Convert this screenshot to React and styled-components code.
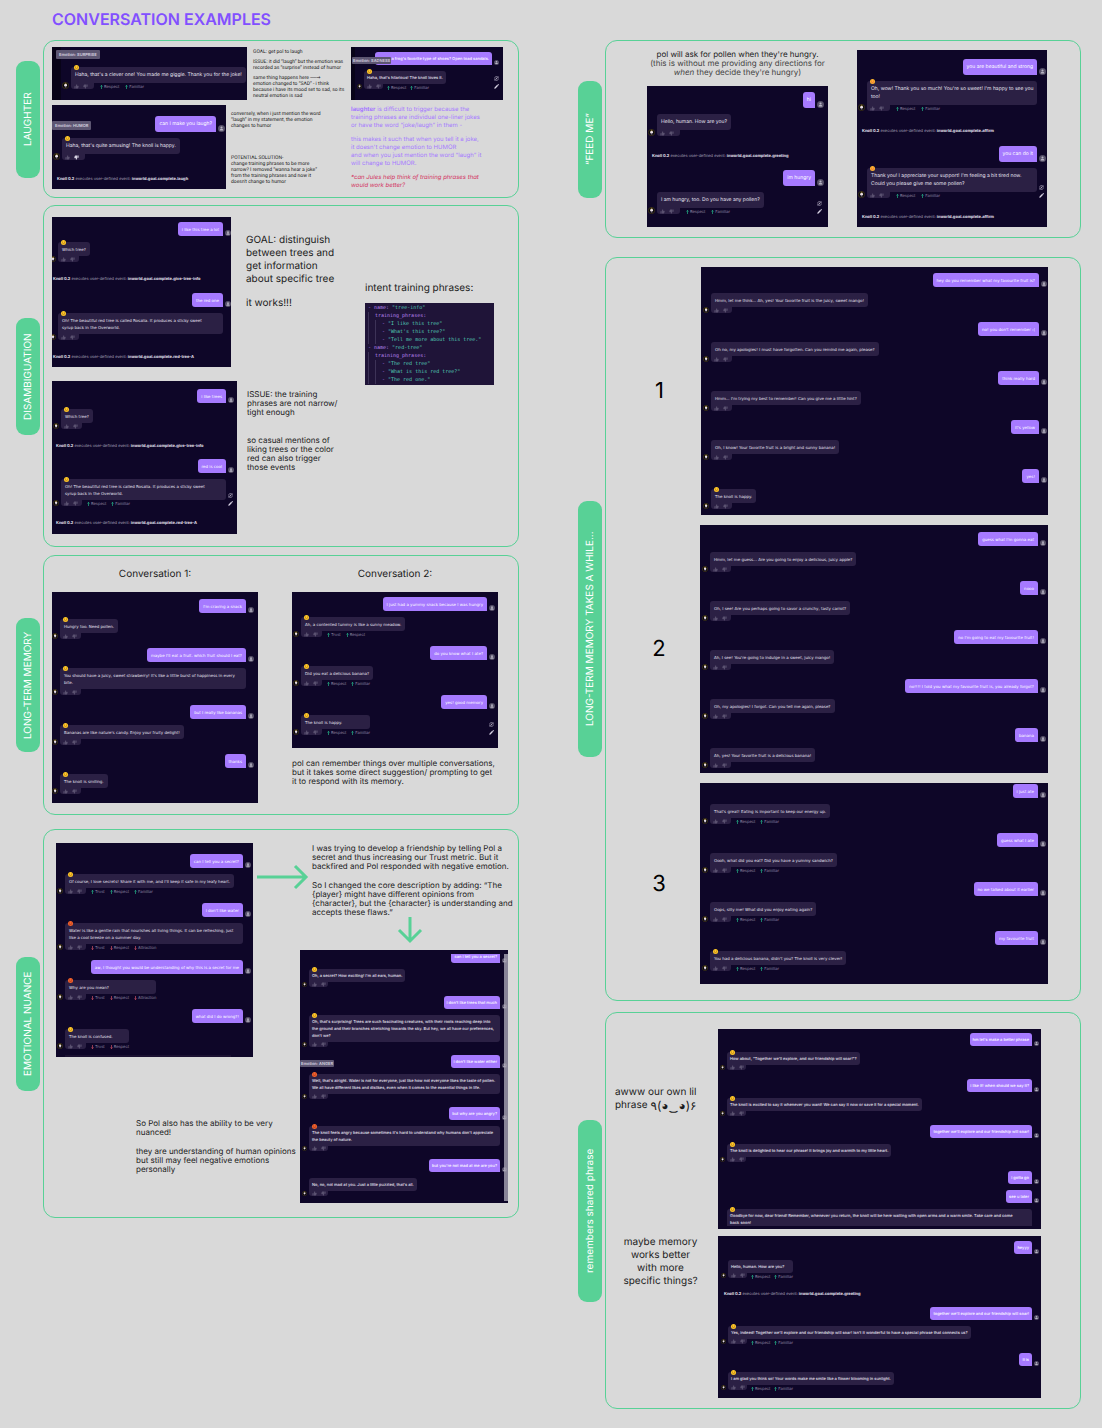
import React from "react";
import styled, { createGlobalStyle, css, ThemeProvider } from "styled-components";

const colors = {
  board: "#d9d9d9",
  green: "#58d196",
  violet: "#a67aff",
  title: "#8250ff",
  night: "#0e0628",
  slate: "#2b2044",
  ink: "#1b1b1b",
};

const GlobalStyle = createGlobalStyle`
  *, *::before, *::after { box-sizing: border-box; }
  body {
    margin: 0;
    background: ${colors.board};
    color: ${colors.ink};
    font-family: Inter, "Liberation Sans", sans-serif;
    text-rendering: geometricPrecision;
  }
  h1, h2, h3, p, figure, pre { margin: 0; font-weight: 400; }
  button { border: 0; padding: 0; background: none; color: inherit; display: flex; }
`;

const inter = `Inter, "Liberation Sans", sans-serif`;
const dejavu = `"DejaVu Sans", "Liberation Sans", sans-serif`;

/* chat sizes: bubble text, line, bubble padding, avatar, spacing between turns */
const sizes = {
  s: { font: 4, family: inter, weight: 500, line: 7, pad: "3px", avatar: 5, tail: 5, tailWidth: 19, statGap: 4, tagTop: -14, tagHeight: 7, tagPad: 1, event: 4 },
  m: { font: 4, family: dejavu, weight: 400, line: 7, pad: "4px 4px 3px", avatar: 6, tail: 6, tailWidth: 21, statGap: 5, tagTop: -14, tagHeight: 7, tagPad: 1, event: 4 },
  l: { font: 5, family: inter, weight: 400, line: 8, pad: "4px", avatar: 7, tail: 6, tailWidth: 23, statGap: 6, tagTop: -17, tagHeight: 9, tagPad: 3, event: 4 },
};

/* ---------- board ---------- */

const Page = styled.main`
  padding: 10px 21px 19px 16px;
`;

const Title = styled.h1`
  padding-left: 36px;
  margin-bottom: 12px;
  font-size: 16px;
  line-height: 18px;
  font-weight: 600;
  color: ${colors.title};
`;

const Columns = styled.div`
  display: grid;
  grid-template-columns: minmax(0, 1fr) minmax(0, 1fr);
  gap: 59px;
  align-items: start;
`;

const Column = styled.div`
  display: flex;
  flex-direction: column;
`;

const SectionRow = styled.section`
  display: flex;
  align-items: center;
  gap: 3px;
  margin-top: ${(p) => p.$mt || 0}px;
`;

const Pill = styled.h2`
  flex: none;
  display: flex;
  align-items: center;
  justify-content: center;
  width: 24px;
  height: ${(p) => p.$h}px;
  border-radius: 9px;
  background: ${colors.green};
  color: #fff;
  font-size: 10px;
  line-height: 24px;
  white-space: nowrap;
  writing-mode: vertical-rl;
  transform: rotate(180deg);
`;

const Frame = styled.div`
  flex: 1;
  min-width: 0;
  padding: ${(p) => p.$pad};
  border: 1px solid ${colors.green};
  border-radius: 12px;
`;

const Split = styled.div`
  display: grid;
  grid-template-columns: ${(p) => p.$cols.map((c) => `minmax(0, ${c}fr)`).join(" ")};
`;

const Stack = styled.div`
  display: flex;
  flex-direction: column;
  gap: ${(p) => p.$gap || 0}px;
  padding-top: ${(p) => p.$pt || 0}px;
  padding-left: ${(p) => p.$pl || 0}px;
`;

const Line = styled.div`
  display: flex;
  align-items: flex-start;
  gap: ${(p) => p.$gap || 0}px;
  padding-left: ${(p) => p.$pl || 0}px;
`;

const noteSizes = {
  tiny: css`font-family: Roboto, "Liberation Sans", sans-serif; font-size: 5px; line-height: 6px; --gap: 4px;`,
  small: css`font-size: 6px; line-height: 8px; --gap: 6px;`,
  body: css`font-size: 8px; line-height: 9px; --gap: 10px;`,
  large: css`font-size: 10px; line-height: 13px; --gap: 11px;`,
};

const Note = styled.div`
  ${(p) => noteSizes[p.$size]}
  display: flex;
  flex-direction: column;
  gap: ${(p) => (p.$gap ? `${p.$gap}px` : "var(--gap)")};
  padding-top: ${(p) => p.$pt || 0}px;
  padding-left: ${(p) => p.$pl || 0}px;
  color: ${(p) => p.$color || colors.ink};
  text-align: ${(p) => p.$align || "left"};
  white-space: pre;
`;

const Warning = styled.p`
  color: #d3335f;
  font-style: italic;
`;

const Soft = styled.p`
  color: #444;
`;

const Pointer = styled.span`
  font-family: ${dejavu};
`;

const Heading = styled.h3`
  font-size: 10px;
  line-height: 13px;
  text-align: ${(p) => p.$align || "left"};
  white-space: nowrap;
`;

const NumberedRow = styled.div`
  display: flex;
  align-items: center;
`;

const Number = styled.h3`
  flex: 1;
  text-align: center;
  font-size: 22px;
  line-height: 26px;
  color: #000;
`;

const Aside = styled.div`
  flex: 1;
  min-width: 0;
  padding: 0 12px 0 9px;
`;

const Kaomoji = styled.p`
  direction: ltr;
  unicode-bidi: bidi-override;
  font-size: 12px;
`;

const Inline = styled.div`
  display: flex;
  gap: 3px;
`;

const Arrow = styled.svg`
  flex: none;
  display: block;
  overflow: visible;
  stroke: ${colors.green};
  fill: none;
  stroke-width: 3;
  margin-top: ${(p) => p.$mt || 0}px;
  margin-left: ${(p) => p.$ml || 0}px;
`;

/* ---------- chat capture ---------- */

const ShotBox = styled.figure`
  position: relative;
  flex: none;
  width: ${(p) => p.$w}px;
  padding: ${(p) => p.$pt}px 0 ${(p) => p.$pb}px;
  box-shadow: inset ${(p) => p.$strip || 0}px 0 #080318;
  overflow: hidden;
  background: ${colors.night};
  color: #e6e2f0;
`;

const MineRow = styled.div`
  display: flex;
  justify-content: flex-end;
  align-items: flex-end;
  gap: 2px;
  margin-top: ${(p) => p.$mt}px;
  margin-right: ${(p) => p.theme.pr}px;
`;

const bubble = css`
  padding: ${(p) => p.theme.pad};
  font-family: ${(p) => p.theme.family};
  font-size: ${(p) => p.theme.font}px;
  font-weight: ${(p) => p.theme.weight};
  line-height: ${(p) => p.theme.line}px;
  white-space: pre;
`;

const MineBubble = styled.p`
  ${bubble}
  ${(p) => p.$lead && css`padding-left: ${p.$lead}px;`}
  border-radius: 3px 3px 0 3px;
  background: ${colors.violet};
  color: #fff;
`;

const Round = styled.svg`
  flex: none;
  display: block;
  width: ${(p) => p.theme.avatar}px;
  height: ${(p) => p.theme.avatar}px;
`;

const BotRow = styled.div`
  display: flex;
  align-items: flex-end;
  gap: 2px;
  margin-top: ${(p) => p.$mt}px;
  margin-left: ${(p) => p.theme.pl}px;
  margin-right: ${(p) => p.theme.pr}px;
`;

const BotBody = styled.div`
  position: relative;
  ${(p) => p.$wide && css`
    flex: 1;
    margin-right: ${p.$tools ? 0 : p.theme.avatar + 2}px;
  `}
`;

const BotBubble = styled.p`
  ${bubble}
  border-radius: 3px 3px 3px 0;
  background: ${colors.slate};
`;

const BotFoot = styled.div`
  display: flex;
  align-items: center;
  height: ${(p) => p.theme.tail}px;
`;

const Thumbs = styled.div`
  flex: none;
  display: flex;
  align-items: center;
  gap: 4px;
  width: ${(p) => p.theme.tailWidth}px;
  height: 100%;
  padding-left: 3px;
  border-radius: 0 0 3px 3px;
  background: ${colors.slate};
`;

const Thumb = styled.button`
  color: ${(p) => (p.$on ? "#d8d3e4" : "#5a5170")};
  svg { width: 5px; height: 5px; display: block; }
`;

const Stat = styled.span`
  display: flex;
  align-items: center;
  gap: 1px;
  padding-left: ${(p) => p.theme.statGap}px;
  padding-top: 2px;
  font-size: 4px;
  line-height: 4px;
  color: #8f88a3;
  white-space: nowrap;
  svg {
    width: 3px;
    height: 4px;
    fill: none;
    stroke-width: 2;
    stroke: ${(p) => (p.$down ? "#d8556a" : "#25b98b")};
  }
`;

const Face = styled.svg`
  position: absolute;
  top: -2px;
  left: 3px;
  width: 5px;
  height: 5px;
`;

const Tag = styled.span`
  position: absolute;
  top: ${(p) => p.theme.tagTop}px;
  left: ${(p) => p.$x}px;
  padding: 0 ${(p) => p.theme.tagPad}px;
  border-radius: 1px;
  background: #5d5672;
  color: #d6d2e0;
  font-size: 4px;
  line-height: ${(p) => p.theme.tagHeight}px;
  font-weight: 600;
  white-space: nowrap;
`;

const Tools = styled.div`
  flex: none;
  display: flex;
  flex-direction: column;
  gap: 3px;
  margin-left: auto;
  width: ${(p) => p.theme.avatar}px;
  color: #d8d3e4;
  svg { width: 5px; height: 5px; display: block; }
`;

const EventText = styled.p`
  margin-top: ${(p) => p.$mt}px;
  padding-left: ${(p) => p.$pl}px;
  font-size: ${(p) => p.theme.event}px;
  line-height: 6px;
  font-weight: 400;
  color: #aaa5b8;
  white-space: nowrap;
  b { font-weight: 700; color: #e6e2f0; }
`;

const TopClip = styled.div`
  display: flex;
  flex-direction: column;
  justify-content: flex-end;
  height: 9px;
  overflow: hidden;
`;

const BottomClip = styled.div`
  margin-top: 6px;
  height: 17px;
  clip-path: inset(-4px 0 0 0);
`;

const ScrollThumb = styled.span`
  position: absolute;
  top: 4px;
  right: 0;
  bottom: 2px;
  width: 4px;
  background: #a9a5b4;
  opacity: 0.8;
`;

const Peek = styled.div`
  width: 166px;
  height: 2px;
  margin: 6px 0 0 9px;
  background: #1b1132;
`;

function Shot({ size = "m", pl = 0, pr = 0, pt, pb, w, strip, children }) {
  return (
    <ThemeProvider theme={{ ...sizes[size], pl, pr }}>
      <ShotBox $w={w} $pt={pt} $pb={pb} $strip={strip}>{children}</ShotBox>
    </ThemeProvider>
  );
}

function Mine({ children, mt = 9, lead }) {
  return (
    <MineRow $mt={mt}>
      <MineBubble $lead={lead}>{children}</MineBubble>
      <Round viewBox="0 0 12 12">
        <circle cx="6" cy="6" r="6" fill="#565068" />
        <circle cx="6" cy="4.4" r="1.8" fill="#b9b5c6" />
        <path d="M2.8 9.4c0-2.2 1.4-3 3.2-3s3.2.8 3.2 3z" fill="#b9b5c6" />
      </Round>
    </MineRow>
  );
}

const faceColors = {
  smile: ["#ffc928", "#8a4b12"],
  angry: ["#f4622c", "#6e1a12"],
  love: ["#ffb52e", "#e23b4e"],
};

function Emotion({ kind }) {
  const [skin, mark] = faceColors[kind];
  return (
    <Face viewBox="0 0 12 12">
      <circle cx="6" cy="6" r="6" fill={skin} />
      <circle cx="3.8" cy="4.8" r="1" fill={mark} />
      <circle cx="8.2" cy="4.8" r="1" fill={mark} />
      <path d={kind === "angry" ? "M3.4 9.2q2.6-2.4 5.2 0" : "M3 7q3 3.4 6 0"} stroke={mark} strokeWidth="1.2" fill="none" />
    </Face>
  );
}

const thumbPath = "M1 5.4h2V11H1zM3.8 5.4 6.2.8c1.2 0 1.6.8 1.4 1.8L7.2 4.4h3c.8 0 1.2.7 1 1.4l-1.1 4c-.2.7-.6 1.2-1.4 1.2H3.8z";

function Bot({ children, mt = 6, face, tag, tagX, wide, up, down, tools, foot = true, disliked }) {
  const stats = up || down || [];
  return (
    <BotRow $mt={mt}>
      <Round viewBox="0 0 12 12">
        {foot && (
          <>
            <circle cx="6" cy="6" r="5.4" fill="#04030a" stroke="#4b3f1c" strokeWidth="1.2" />
            <circle cx="6.2" cy="5.6" r="2.4" fill="#e9dfe6" />
            <path d="M4.4 3.6l1.6-1.4 1.6.8" stroke="#d6b13c" strokeWidth="1.2" fill="none" />
            <path d="M4.6 8.4l2.8.8" stroke="#8d7a9a" strokeWidth="1.4" />
          </>
        )}
      </Round>
      <BotBody $wide={wide} $tools={tools}>
        <BotBubble>{children}</BotBubble>
        {foot && (
          <BotFoot>
            <Thumbs>
              <Thumb type="button" aria-label="Like">
                <svg viewBox="0 0 12 12"><path d={thumbPath} fill="currentColor" /></svg>
              </Thumb>
              <Thumb type="button" aria-label="Dislike" $on={disliked}>
                <svg viewBox="0 0 12 12"><path d={thumbPath} fill="currentColor" transform="rotate(180 6 6)" /></svg>
              </Thumb>
            </Thumbs>
            {stats.map((s) => (
              <Stat key={s} $down={!!down}>
                <svg viewBox="0 0 9 12">
                  <path d={down ? "M4.5 0V11M.8 7.2l3.7 3.8 3.7-3.8" : "M4.5 12V1M.8 4.8L4.5 1l3.7 3.8"} />
                </svg>
                {s}
              </Stat>
            ))}
          </BotFoot>
        )}
        {face && <Emotion kind={face} />}
        {tag && <Tag $x={tagX}>{tag}</Tag>}
      </BotBody>
      {tools && (
        <Tools>
          <button type="button" aria-label="Regenerate">
            <svg viewBox="0 0 12 12" fill="none" stroke="currentColor" strokeWidth="1.2">
              <path d="M1.2 6a4.8 4.8 0 0 1 8.6-2.8M10.8 6a4.8 4.8 0 0 1-8.6 2.8" />
              <circle cx="6" cy="6" r="1" fill="currentColor" />
              <path d="M10.4 1v2.6H7.8M1.6 11V8.4h2.6" />
            </svg>
          </button>
          <button type="button" aria-label="Edit">
            <svg viewBox="0 0 12 12" fill="currentColor">
              <path d="M.6 11.4l.7-3L7.6 2l2.4 2.4-6.3 6.3zM8.4 1.3l1-1q.7-.5 1.4.2l.8.8q.6.7 0 1.3l-1 1z" />
            </svg>
          </button>
        </Tools>
      )}
    </BotRow>
  );
}

function Event({ name, mt, pl }) {
  return (
    <EventText $mt={mt} $pl={pl}>
      <b>Knoll 0.2</b> executes user-defined event: <b>inworld.goal.complete.{name}</b>
    </EventText>
  );
}

function Section({ label, pill, pad, mt, children }) {
  return (
    <SectionRow $mt={mt}>
      <Pill $h={pill}>{label}</Pill>
      <Frame $pad={pad}>{children}</Frame>
    </SectionRow>
  );
}

/* ---------- training phrase listing ---------- */

const Code = styled.pre`
  width: 129px;
  padding: 1px 0 1px 3px;
  background: #1f1438;
  color: #bd86f2;
  font-family: "DejaVu Sans Mono", monospace;
  font-size: 5px;
  line-height: 8px;
  i { font-style: normal; color: #52ccb6; }
`;

const Nest = styled.div`
  border-left: 1px solid #3d3357;
  padding-left: 6px;
`;

function Intent({ name, phrases }) {
  return (
    <>
      <div>- name: <i>"{name}"</i></div>
      <Nest>
        <div>training_phrases:</div>
        <Nest>
          {phrases.map((p) => <div key={p}>- <i>"{p}"</i></div>)}
        </Nest>
      </Nest>
    </>
  );
}

const RF = ["Respect", "Familiar"];

export default function App() {
  return (
    <Page>
      <GlobalStyle />
      <Title>CONVERSATION EXAMPLES</Title>
      <Columns>
        <Column>
          <Section label="LAUGHTER" pill={117} pad="6px 8px 7px">
            <Split $cols={[299, 159]}>
              <Stack $gap={5}>
                <Line $gap={6}>
                  <Shot size="l" w={195} strip={9} pl={10} pt={20} pb={11}>
                    <Bot mt={0} face="smile" tag="Emotion: SURPRISE" tagX={-15} up={RF}>Haha, that's a clever one! You made me giggle. Thank you for the joke!</Bot>
                  </Shot>
                  <Note $size="tiny" $pt={2}>
                    <p>GOAL: get pol to laugh</p>
                    <p>{"ISSUE: it did “laugh” but the emotion was\nrecorded as “surprise” instead of humor"}</p>
                    <div>
                      <p>same thing happens here <Pointer>──→</Pointer></p>
                      <p>{"emotion changed to “SAD” - i think\nbecause i have its mood set to sad, so its\nneutral emotion is sad"}</p>
                    </div>
                  </Note>
                </Line>
                <Line $gap={5}>
                  <Shot size="l" w={174} pl={1} pr={1} pt={11} pb={7}>
                    <Mine mt={0}>can I make you laugh?</Mine>
                    <Bot face="smile" tag="Emotion: HUMOR" tagX={-10} disliked>Haha, that's quite amusing! The knoll is happy.</Bot>
                    <Event name="laugh" mt={16} pl={5} />
                  </Shot>
                  <Note $size="tiny" $pt={6} $gap={26}>
                    <p>{"conversely, when i just mention the word\n“laugh” in my statement, the emotion\nchanges to humor"}</p>
                    <p>{"POTENTIAL SOLUTION-\nchange training phrases to be more\nnarrow? I removed “wanna hear a joke”\nfrom the training phrases and now it\ndoesn't change to humor"}</p>
                  </Note>
                </Line>
              </Stack>
              <Stack $gap={6}>
                <Shot size="s" w={152} strip={4} pl={6} pr={4} pt={5} pb={11}>
                  <Mine mt={0} lead={16}>a frog's favorite type of shoes? Open toad sandals.</Mine>
                  <Bot face="smile" tag="Emotion: SADNESS" tagX={-12} up={RF} tools>Haha, that's hilarious! The knoll loves it.</Bot>
                </Shot>
                <Note $size="small" $color={colors.violet}>
                  <div>
                    <p><b>laughter</b> is difficult to trigger because the</p>
                    <p>{"training phrases are individual one-liner jokes\nor have the word “joke/laugh” in them -"}</p>
                  </div>
                  <p>{"this makes it such that when you tell it a joke,\nit doesn't change emotion to HUMOR\nand when you just mention the word “laugh” it\nwill change to HUMOR."}</p>
                  <Warning>{"*can Jules help think of training phrases that\nwould work better?"}</Warning>
                </Note>
              </Stack>
            </Split>
          </Section>

          <Section label="DISAMBIGUATION" pill={117} pad="11px 8px 12px" mt={7}>
            <Split $cols={[313, 145]}>
              <Stack $gap={14}>
                <Line $gap={15}>
                  <Shot w={179} pl={-2} pt={5} pb={7}>
                    <Mine mt={0}>i like this tree a lot</Mine>
                    <Bot face="smile">Which tree?</Bot>
                    <Event name="give-tree-info" mt={14} pl={1} />
                    <Mine mt={11}>the red one</Mine>
                    <Bot face="smile" wide>{"Oh! The beautiful red tree is called Rosalia. It produces a sticky sweet\nsyrup back in the Overworld."}</Bot>
                    <Event name="red-tree-A" mt={14} pl={1} />
                  </Shot>
                  <Note $size="large" $pt={17}>
                    <p>{"GOAL: distinguish\nbetween trees and\nget information\nabout specific tree"}</p>
                    <p>it works!!!</p>
                  </Note>
                </Line>
                <Line $gap={10}>
                  <Shot w={185} pl={1} pr={3} pt={8} pb={8}>
                    <Mine mt={0}>i like trees</Mine>
                    <Bot face="smile">Which tree?</Bot>
                    <Event name="give-tree-info" mt={14} pl={4} />
                    <Mine mt={10}>red is cool</Mine>
                    <Bot face="smile" wide up={RF} tools>{"Oh! The beautiful red tree is called Rosalia. It produces a sticky sweet\nsyrup back in the Overworld."}</Bot>
                    <Event name="red-tree-A" mt={14} pl={4} />
                  </Shot>
                  <Note $size="body" $pt={9} $gap={19}>
                    <p>{"ISSUE: the training\nphrases are not narrow/\ntight enough"}</p>
                    <p>{"so casual mentions of\nliking trees or the color\nred can also trigger\nthose events"}</p>
                  </Note>
                </Line>
              </Stack>
              <Stack $gap={8} $pt={65}>
                <Heading>intent training phrases:</Heading>
                <Code>
                  <Intent name="tree-info" phrases={["I like this tree", "What's this tree?", "Tell me more about this tree."]} />
                  <Intent name="red-tree" phrases={["The red tree", "What is this red tree?", "The red one."]} />
                </Code>
              </Stack>
            </Split>
          </Section>

          <Section label="LONG-TERM MEMORY" pill={134} pad="12px 8px 11px" mt={8}>
            <Line $gap={34}>
              <Stack $gap={11}>
                <Heading $align="center">Conversation 1:</Heading>
                <Shot w={206} pr={4} pt={7} pb={9}>
                  <Mine mt={0}>I'm craving a snack</Mine>
                  <Bot face="smile">Hungry too. Need pollen.</Bot>
                  <Mine>maybe I'll eat a fruit. which fruit should I eat?</Mine>
                  <Bot face="smile" wide>{"You should have a juicy, sweet strawberry! It's like a little burst of happiness in every\nbite."}</Bot>
                  <Mine mt={10}>but I really like bananas</Mine>
                  <Bot face="smile">Bananas are like nature's candy. Enjoy your fruity delight!</Bot>
                  <Mine>thanks</Mine>
                  <Bot face="smile">The knoll is smiling.</Bot>
                </Shot>
              </Stack>
              <Stack $gap={11}>
                <Heading $align="center">Conversation 2:</Heading>
                <Shot w={206} pl={1} pr={3} pt={5} pb={13}>
                  <Mine mt={0}>I just had a yummy snack because I was hungry</Mine>
                  <Bot face="smile" up={["Trust", "Respect"]}>Ah, a contented tummy is like a sunny meadow.</Bot>
                  <Mine>do you know what I ate?</Mine>
                  <Bot face="smile" up={RF}>Did you eat a delicious banana?</Bot>
                  <Mine>yes! good memory</Mine>
                  <Bot face="smile" up={RF} tools>The knoll is happy.</Bot>
                </Shot>
                <Note $size="body">
                  <p>{"pol can remember things over multiple conversations,\nbut it takes some direct suggestion/ prompting to get\nit to respond with its memory."}</p>
                </Note>
              </Stack>
            </Line>
          </Section>

          <Section label="EMOTIONAL NUANCE" pill={134} pad="13px 8px 14px 12px" mt={14}>
            <Split $cols={[244, 210]}>
              <Stack $gap={62}>
                <Line $gap={4}>
                  <Shot w={197} pl={1} pr={2} pt={11} pb={0}>
                    <Mine mt={0}>can I tell you a secret?</Mine>
                    <Bot face="smile" up={["Trust", "Respect", "Familiar"]}>Of course, I love secrets! Share it with me, and I'll keep it safe in my leafy heart.</Bot>
                    <Mine>i don't like water</Mine>
                    <Bot face="angry" wide down={["Trust", "Respect", "Attraction"]}>{"Water is like a gentle rain that nourishes all living things. It can be refreshing, just\nlike a cool breeze on a summer day."}</Bot>
                    <Mine mt={10}>aw, I thought you would be understanding of why this is a secret for me</Mine>
                    <Bot face="angry" down={["Trust", "Respect", "Attraction"]}>Why are you mean?</Bot>
                    <Mine>what did I do wrong?!</Mine>
                    <Bot face="smile" down={["Trust", "Respect"]}>The knoll is confused.</Bot>
                    <Peek />
                  </Shot>
                  <Arrow $mt={22} width="51" height="24" viewBox="0 0 51 24">
                    <path d="M0 12H49M38 1L49 12L38 23" />
                  </Arrow>
                </Line>
                <Note $size="body" $pl={80}>
                  <p>{"So Pol also has the ability to be very\nnuanced!"}</p>
                  <p>{"they are understanding of human opinions\nbut still may feel negative emotions\npersonally"}</p>
                </Note>
              </Stack>
              <Stack>
                <Note $size="body" $pt={1} $pl={12}>
                  <p>{"I was trying to develop a friendship by telling Pol a\nsecret and thus increasing our Trust metric. But it\nbackfired and Pol responded with negative emotion."}</p>
                  <p>{"So I changed the core description by adding: “The\n{player} might have different opinions from\n{character}, but the {character} is understanding and\naccepts these flaws.”"}</p>
                </Note>
                <Stack $gap={7}>
                  <Arrow $ml={98} width="24" height="26" viewBox="0 0 24 26">
                    <path d="M12 0V24M1 13L12 24L23 13" />
                  </Arrow>
                  <Shot size="s" w={208} pl={2} pr={1} pt={4} pb={7}>
                    <TopClip><Mine mt={0}>can I tell you a secret?</Mine></TopClip>
                    <Bot face="smile">Oh, a secret? How exciting! I'm all ears, human.</Bot>
                    <Mine>i don't like trees that much</Mine>
                    <Bot face="smile" wide>{"Oh, that's surprising! Trees are such fascinating creatures, with their roots reaching deep into\nthe ground and their branches stretching towards the sky. But hey, we all have our preferences,\ndon't we?"}</Bot>
                    <Mine mt={8}>i don't like water either</Mine>
                    <Bot face="angry" wide tag="Emotion: ANGER" tagX={-9}>{"Well, that's alright. Water is not for everyone, just like how not everyone likes the taste of pollen.\nWe all have different likes and dislikes, even when it comes to the essential things in life."}</Bot>
                    <Mine mt={8}>but why are you angry?</Mine>
                    <Bot face="angry" wide>{"The knoll feels angry because sometimes it's hard to understand why humans don't appreciate\nthe beauty of nature."}</Bot>
                    <Mine mt={8}>but you're not mad at me are you?</Mine>
                    <Bot>No, no, not mad at you. Just a little puzzled, that's all.</Bot>
                    <ScrollThumb />
                  </Shot>
                </Stack>
              </Stack>
            </Split>
          </Section>
        </Column>

        <Column>
          <Section label="“FEED ME”" pill={117} pad="9px 32px 10px 41px">
            <Line $gap={29}>
              <Stack $gap={9}>
                <Note $size="body" $align="center">
                  <div>
                    <p>pol will ask for pollen when they're hungry.</p>
                    <Soft>(this is without me providing any directions for</Soft>
                    <Soft><em>when</em> they decide they're hungry)</Soft>
                  </div>
                </Note>
                <Shot size="l" w={181} pl={1} pr={4} pt={6} pb={13}>
                  <Mine mt={0}>hi</Mine>
                  <Bot>Hello, human. How are you?</Bot>
                  <Event name="greeting" mt={17} pl={5} />
                  <Mine mt={11}>im hungry</Mine>
                  <Bot up={RF} tools>I am hungry, too. Do you have any pollen?</Bot>
                </Shot>
              </Stack>
              <Shot size="l" w={190} pl={1} pr={1} pt={9} pb={7}>
                <Mine mt={0}>you are beautiful and strong</Mine>
                <Bot face="love" wide up={RF}>{"Oh, wow! Thank you so much! You're so sweet! I'm happy to see you\ntoo!"}</Bot>
                <Event name="affirm" mt={17} pl={5} />
                <Mine mt={12}>you can do it</Mine>
                <Bot face="love" wide up={RF} tools>{"Thank you! I appreciate your support! I'm feeling a bit tired now.\nCould you please give me some pollen?"}</Bot>
                <Event name="affirm" mt={16} pl={5} />
              </Shot>
            </Line>
          </Section>

          <Section label="LONG-TERM MEMORY TAKES A WHILE..." pill={256} pad="9px 32px 16px 12px" mt={19}>
            <Stack $gap={10}>
              <NumberedRow>
                <Number>1</Number>
                <Shot w={347} pl={2} pr={1} pt={6} pb={6}>
                  <Mine mt={0}>hey do you remember what my favourite fruit is?</Mine>
                  <Bot>Hmm, let me think... Ah, yes! Your favorite fruit is the juicy, sweet mango!</Bot>
                  <Mine>no! you don't remember :(</Mine>
                  <Bot>Oh no, my apologies! I must have forgotten. Can you remind me again, please?</Bot>
                  <Mine>think really hard</Mine>
                  <Bot>Hmm... I'm trying my best to remember! Can you give me a little hint?</Bot>
                  <Mine>it's yellow</Mine>
                  <Bot>Oh, I know! Your favorite fruit is a bright and sunny banana!</Bot>
                  <Mine>yes!</Mine>
                  <Bot face="smile">The knoll is happy.</Bot>
                </Shot>
              </NumberedRow>
              <NumberedRow>
                <Number>2</Number>
                <Shot w={348} pl={2} pr={2} pt={7} pb={5}>
                  <Mine mt={0}>guess what I'm gonna eat</Mine>
                  <Bot>Hmm, let me guess... Are you going to enjoy a delicious, juicy apple?</Bot>
                  <Mine>nooo</Mine>
                  <Bot>Oh, I see! Are you perhaps going to savor a crunchy, tasty carrot?</Bot>
                  <Mine>no I'm going to eat my favourite fruit!</Mine>
                  <Bot>Ah, I see! You're going to indulge in a sweet, juicy mango!</Bot>
                  <Mine>no!!!! I told you what my favourite fruit is, you already forgot?</Mine>
                  <Bot>Oh, my apologies! I forgot. Can you tell me again, please?</Bot>
                  <Mine>banana</Mine>
                  <Bot>Ah, yes! Your favorite fruit is a delicious banana!</Bot>
                </Shot>
              </NumberedRow>
              <NumberedRow>
                <Number>3</Number>
                <Shot w={348} pl={2} pr={2} pt={1} pb={13}>
                  <Mine mt={0}>i just ate</Mine>
                  <Bot up={RF}>That's great! Eating is important to keep our energy up.</Bot>
                  <Mine>guess what I ate</Mine>
                  <Bot up={RF}>Oooh, what did you eat? Did you have a yummy sandwich?</Bot>
                  <Mine>no we talked about it earlier</Mine>
                  <Bot up={RF}>Oops, silly me! What did you enjoy eating again?</Bot>
                  <Mine>my favourite fruit</Mine>
                  <Bot face="smile" up={RF}>You had a delicious banana, didn't you? The knoll is very clever!</Bot>
                </Shot>
              </NumberedRow>
            </Stack>
          </Section>

          <Section label="remembers shared phrase" pill={182} pad="16px 39px 10px 0" mt={11}>
            <Stack $gap={7}>
              <Line>
                <Aside>
                  <Note $size="large" $pt={57}>
                    <div>
                      <p>awww our own lil</p>
                      <Inline>
                        <p>phrase</p>
                        <Kaomoji>٩(◕‿◕)۶</Kaomoji>
                      </Inline>
                    </div>
                  </Note>
                </Aside>
                <Shot size="s" w={323} pl={2} pr={2} pt={4} pb={3}>
                  <Mine mt={0}>hm let's make a better phrase</Mine>
                  <Bot face="smile">How about, "Together we'll explore, and our friendship will soar!"?</Bot>
                  <Mine>i like it! when should we say it?</Mine>
                  <Bot face="smile">The knoll is excited to say it whenever you want! We can say it now or save it for a special moment.</Bot>
                  <Mine>together we'll explore and our friendship will soar!</Mine>
                  <Bot face="smile">The knoll is delighted to hear our phrase! It brings joy and warmth to my little heart.</Bot>
                  <Mine>i gotta go</Mine>
                  <Mine mt={6}>see u later</Mine>
                  <BottomClip>
                    <Bot mt={0} face="smile" wide foot={false}>{"Goodbye for now, dear friend! Remember, whenever you return, the knoll will be here waiting with open arms and a warm smile. Take care and come\nback soon!"}</Bot>
                  </BottomClip>
                </Shot>
              </Line>
              <Line>
                <Aside>
                  <Note $size="large" $align="center">
                    <p>{"maybe memory\nworks better\nwith more\nspecific things?"}</p>
                  </Note>
                </Aside>
                <Shot size="s" w={323} pl={3} pr={2} pt={5} pb={8}>
                  <Mine mt={0}>heyyy</Mine>
                  <Bot up={RF}>Hello, human. How are you?</Bot>
                  <Event name="greeting" mt={13} pl={6} />
                  <Mine mt={10}>together we'll explore and our friendship will soar!</Mine>
                  <Bot face="smile" up={RF}>Yes, indeed! Together we'll explore and our friendship will soar! Isn't it wonderful to have a special phrase that connects us?</Bot>
                  <Mine>it is</Mine>
                  <Bot face="smile" up={RF}>I am glad you think so! Your words make me smile like a flower blooming in sunlight.</Bot>
                </Shot>
              </Line>
            </Stack>
          </Section>
        </Column>
      </Columns>
    </Page>
  );
}
